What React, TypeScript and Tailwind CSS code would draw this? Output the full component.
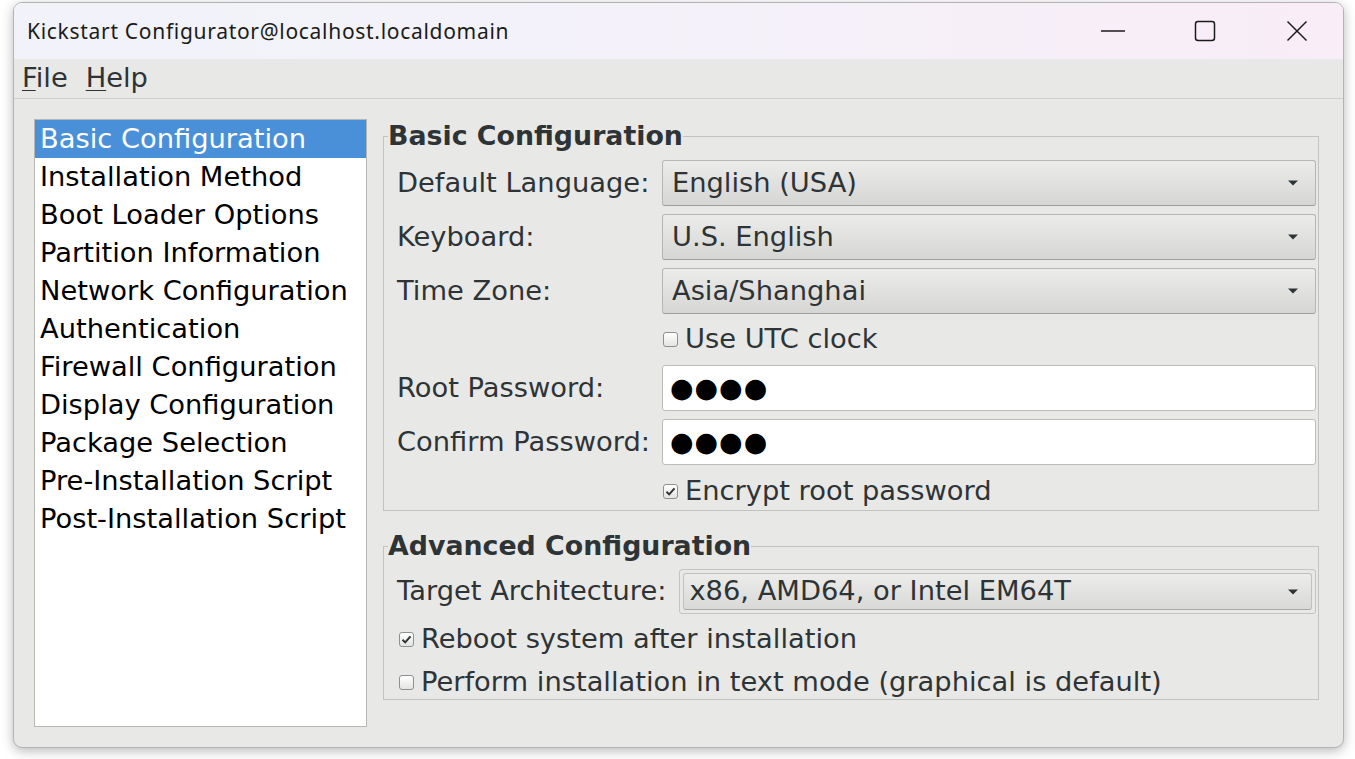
import React from "react";

const sections = [
  "Basic Configuration",
  "Installation Method",
  "Boot Loader Options",
  "Partition Information",
  "Network Configuration",
  "Authentication",
  "Firewall Configuration",
  "Display Configuration",
  "Package Selection",
  "Pre-Installation Script",
  "Post-Installation Script",
];

function Arrow() {
  return (
    <svg width="10" height="6" viewBox="0 0 10 6" className="shrink-0">
      <path d="M0 0.5 L10 0.5 L5 5.5 Z" fill="#2e3436" />
    </svg>
  );
}

function Combo({ value }: { value: string }) {
  return (
    <div className="h-[46px] rounded-[3px] border border-[#b6b6b3] border-b-[#9e9e9b] bg-gradient-to-b from-[#ececeb] to-[#d6d6d4] flex items-center pl-[9px] pr-[17px] text-[#2e3436]">
      <span className="flex-1">{value}</span>
      <Arrow />
    </div>
  );
}

function FramedCombo({ value }: { value: string }) {
  return (
    <div className="h-[45px] rounded-[3px] border border-[#c4c4c1] bg-[#e8e8e7] p-[3px]">
      <div className="h-full rounded-[3px] border border-[#c0c0bd] border-b-[#a8a8a5] bg-gradient-to-b from-[#ececeb] to-[#d9d9d7] flex items-center pl-[5px] pr-[13px] text-[#2e3436]">
        <span className="flex-1">{value}</span>
        <Arrow />
      </div>
    </div>
  );
}

function Entry() {
  return (
    <div className="h-[46px] rounded-[3px] border border-[#bcbcb9] bg-white flex items-center px-[7px] text-black text-[27px] tracking-[1px]">
      ●●●●
    </div>
  );
}

function Check({ checked, label }: { checked?: boolean; label: string }) {
  return (
    <div className="flex items-center gap-[7px] text-[#2e3436]">
      <div className="w-[15px] h-[15px] rounded-[3px] border border-[#8e9192] bg-gradient-to-b from-white to-[#e4e4e3] flex items-center justify-center">
        {checked && (
          <svg width="11" height="11" viewBox="0 0 11 11">
            <path d="M1.5 5.8 L4.2 8.4 L9.5 2.4" stroke="#2e3436" strokeWidth="2" fill="none" />
          </svg>
        )}
      </div>
      <span>{label}</span>
    </div>
  );
}

function Frame({ title, children }: { title: string; children: React.ReactNode }) {
  return (
    <fieldset className="border border-[#c2c2bf] m-0 p-0">
      <legend className="ml-[4px] font-bold text-[26.8px] text-[#2e3436] leading-[28px]">{title}</legend>
      {children}
    </fieldset>
  );
}

export default function App() {
  return (
    <div className="w-[1355px] h-[759px] bg-white pt-[2px] pl-[13px] font-['DejaVu_Sans',sans-serif]">
      <div className="w-[1331px] h-[746px] rounded-[9px] border border-[#b3b3b3] overflow-hidden bg-[#e8e8e7] flex flex-col shadow-[0_3px_12px_rgba(0,0,0,0.28)]">
        {/* title bar */}
        <div className="h-[56px] shrink-0 flex items-center bg-gradient-to-r from-[#f1f3f9] via-[#f4f1f9] to-[#f9edf7]">
          <span className="pl-[13px] pt-[2px] text-[21px] tracking-[0.7px] text-[#1b1b1b] font-['Noto_Sans',sans-serif]">
            Kickstart Configurator@localhost.localdomain
          </span>
          <div className="ml-auto flex h-full">
            <div className="w-[92px] flex items-center justify-center">
              <svg width="26" height="4" viewBox="0 0 26 4">
                <path d="M1 2 H25" stroke="#1b1b1b" strokeWidth="1.4" />
              </svg>
            </div>
            <div className="w-[92px] flex items-center justify-center">
              <svg width="22" height="22" viewBox="0 0 22 22">
                <rect x="1.5" y="1.5" width="19" height="19" rx="2.5" stroke="#1b1b1b" strokeWidth="1.5" fill="none" />
              </svg>
            </div>
            <div className="w-[92px] flex items-center justify-center">
              <svg width="22" height="22" viewBox="0 0 22 22">
                <path d="M1.5 1.5 L20.5 20.5 M20.5 1.5 L1.5 20.5" stroke="#1b1b1b" strokeWidth="1.5" />
              </svg>
            </div>
          </div>
        </div>

        {/* menu bar */}
        <div className="h-[40px] shrink-0 flex items-center gap-[18px] pl-[8px] border-b border-[#cfcfcd] text-[27.3px] text-[#2e3436]">
          <span>
            <span className="underline underline-offset-[3px] decoration-1">F</span>ile
          </span>
          <span>
            <span className="underline underline-offset-[3px] decoration-1">H</span>elp
          </span>
        </div>

        {/* content */}
        <div className="flex pl-[20px] pt-[20px] text-[27.3px]">
          <div className="w-[333px] h-[608px] shrink-0 bg-white border border-[#b6b6b3] flex flex-col">
            {sections.map((s, i) => (
              <div
                key={s}
                className={
                  i === 0
                    ? "h-[38px] flex items-center pl-[5px] bg-[#4a90d9] text-white"
                    : "h-[38px] flex items-center pl-[5px] text-black"
                }
              >
                {s}
              </div>
            ))}
          </div>

          <div className="ml-[16px] w-[936px] mt-[3px] flex flex-col gap-[21px]">
            <Frame title="Basic Configuration">
              <div className="grid grid-cols-[auto_1fr] gap-x-[12px] gap-y-[8px] items-center pl-[13px] pr-[2px] pt-[10px] pb-[1px] text-[#2e3436]">
                <span>Default Language:</span>
                <Combo value="English (USA)" />
                <span>Keyboard:</span>
                <Combo value="U.S. English" />
                <span>Time Zone:</span>
                <Combo value="Asia/Shanghai" />
                <span />
                <div className="h-[35px] flex items-center pl-[1px]">
                  <Check label="Use UTC clock" />
                </div>
                <span>Root Password:</span>
                <Entry />
                <span>Confirm Password:</span>
                <Entry />
                <span />
                <div className="h-[36px] flex items-center pl-[1px]">
                  <Check checked label="Encrypt root password" />
                </div>
              </div>
            </Frame>

            <Frame title="Advanced Configuration">
              <div className="flex flex-col pl-[13px] pr-[2px] pt-[9px] text-[#2e3436]">
                <div className="flex items-center gap-[13px]">
                  <span>Target Architecture:</span>
                  <div className="flex-1">
                    <FramedCombo value="x86, AMD64, or Intel EM64T" />
                  </div>
                </div>
                <div className="h-[34px] mt-[8px] flex items-center pl-[2px]">
                  <Check checked label="Reboot system after installation" />
                </div>
                <div className="h-[34px] mt-[9px] flex items-center pl-[2px]">
                  <Check label="Perform installation in text mode (graphical is default)" />
                </div>
              </div>
            </Frame>
          </div>
        </div>
      </div>
    </div>
  );
}
